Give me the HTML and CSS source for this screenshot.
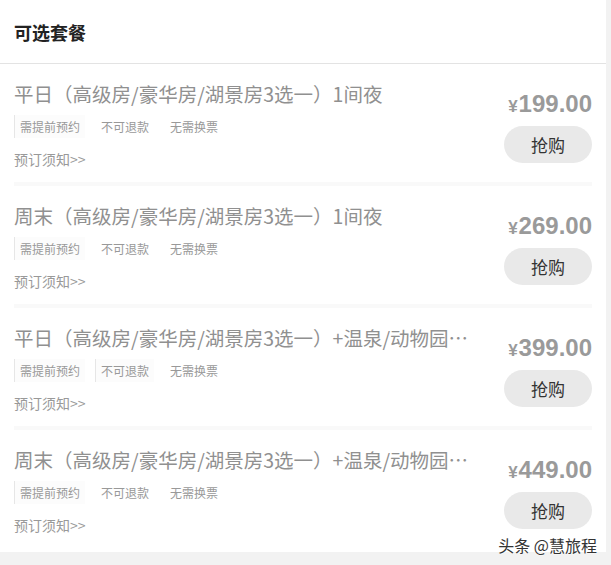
FILE: index.html
```html
<!DOCTYPE html>
<html lang="zh-CN">
<head>
    <meta charset="UTF-8">
    <meta name="viewport" content="width=device-width, initial-scale=1.0">
    <title>可选套餐</title>
    <link rel="stylesheet" href="styles.css">
</head>
<body>
    <div class="panel">
        <div class="panel-header">
            <h2>可选套餐</h2>
        </div>

        <div class="deal-list">
            <!-- 平日 1间夜 -->
            <div class="deal">
                <div class="deal-info">
                    <div class="deal-title">平日（高级房/豪华房/湖景房3选一）1间夜</div>
                    <div class="deal-tags">
                        <span class="tag tag-line">需提前预约</span>
                        <span class="tag">不可退款</span>
                        <span class="tag">无需换票</span>
                    </div>
                    <div class="deal-notice">预订须知&gt;&gt;</div>
                </div>
                <div class="deal-buy">
                    <div class="price"><span class="yen">¥</span>199.00</div>
                    <button class="buy-btn">抢购</button>
                </div>
            </div>

            <!-- 周末 1间夜 -->
            <div class="deal">
                <div class="deal-info">
                    <div class="deal-title">周末（高级房/豪华房/湖景房3选一）1间夜</div>
                    <div class="deal-tags">
                        <span class="tag tag-line">需提前预约</span>
                        <span class="tag">不可退款</span>
                        <span class="tag">无需换票</span>
                    </div>
                    <div class="deal-notice">预订须知&gt;&gt;</div>
                </div>
                <div class="deal-buy">
                    <div class="price"><span class="yen">¥</span>269.00</div>
                    <button class="buy-btn">抢购</button>
                </div>
            </div>

            <!-- 平日 + 温泉 -->
            <div class="deal">
                <div class="deal-info">
                    <div class="deal-title">平日（高级房/豪华房/湖景房3选一）+温泉/动物园门票2张</div>
                    <div class="deal-tags">
                        <span class="tag tag-line">需提前预约</span>
                        <span class="tag tag-line">不可退款</span>
                        <span class="tag">无需换票</span>
                    </div>
                    <div class="deal-notice">预订须知&gt;&gt;</div>
                </div>
                <div class="deal-buy">
                    <div class="price"><span class="yen">¥</span>399.00</div>
                    <button class="buy-btn">抢购</button>
                </div>
            </div>

            <!-- 周末 + 温泉 -->
            <div class="deal">
                <div class="deal-info">
                    <div class="deal-title">周末（高级房/豪华房/湖景房3选一）+温泉/动物园门票2张</div>
                    <div class="deal-tags">
                        <span class="tag tag-line">需提前预约</span>
                        <span class="tag">不可退款</span>
                        <span class="tag">无需换票</span>
                    </div>
                    <div class="deal-notice">预订须知&gt;&gt;</div>
                </div>
                <div class="deal-buy">
                    <div class="price"><span class="yen">¥</span>449.00</div>
                    <button class="buy-btn">抢购</button>
                </div>
            </div>
        </div>
    </div>

    <div class="watermark">头条 @慧旅程</div>
</body>
</html>
```

FILE: styles.css
```css
* {
    margin: 0;
    padding: 0;
    box-sizing: border-box;
}

body {
    font-family: "Noto Sans CJK SC", "Noto Sans", sans-serif;
    background: #f2f2f2;
    min-height: 565px;
    position: relative;
}

.panel {
    width: 606px;
    background: #fff;
}

.panel-header {
    height: 64px;
    padding: 0 14px;
    display: flex;
    align-items: center;
    border-bottom: 1px solid #e3e3e3;
}

.panel-header h2 {
    font-size: 18px;
    font-weight: 700;
    color: #222;
}

.deal {
    display: flex;
    gap: 30px;
    margin: 0 14px;
    padding: 15px 0 12px;
    border-bottom: 4px solid #f9f9f9;
}

.deal:last-child {
    border-bottom-color: #fff;
}

.deal-info {
    flex: 1;
    min-width: 0;
}

.deal-title {
    font-size: 19.5px;
    line-height: 30px;
    color: #909090;
    white-space: nowrap;
    overflow: hidden;
    text-overflow: ellipsis;
}

.deal-tags {
    display: flex;
    margin-top: 6px;
}

.tag {
    font-size: 12px;
    line-height: 23px;
    color: #999;
    padding: 0 5px;
    margin-right: 10px;
    border-left: 1px solid transparent;
}

.tag-line {
    border-left-color: #e6e6e6;
    background: #fcfcfc;
}

.deal-notice {
    margin-top: 10px;
    font-size: 14px;
    line-height: 22px;
    color: #999;
}

.deal-buy {
    flex: none;
    width: 88px;
    display: flex;
    flex-direction: column;
    align-items: flex-end;
}

.price {
    margin-top: 11px;
    font-family: "Liberation Sans", Arial, sans-serif;
    font-size: 24px;
    line-height: 28px;
    font-weight: 700;
    color: #9a9a9a;
    white-space: nowrap;
}

.yen {
    font-size: 17px;
    margin-right: 1px;
}

.buy-btn {
    margin-top: 5px;
    width: 88px;
    height: 37px;
    border: none;
    border-radius: 19px;
    background: #e9e9e9;
    color: #333;
    font-family: "Noto Sans CJK SC", sans-serif;
    font-size: 17px;
    cursor: pointer;
}

.watermark {
    position: absolute;
    right: 14px;
    bottom: 8px;
    font-size: 16px;
    color: #333;
    text-shadow: 0 0 2px #fff, 0 0 2px #fff;
}
```
